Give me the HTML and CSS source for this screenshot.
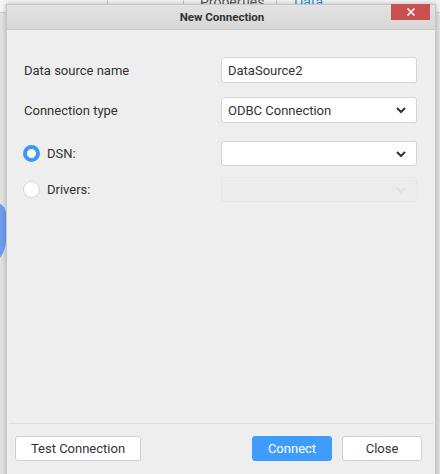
FILE: index.html
```html
<!DOCTYPE html>
<html>
<head>
<meta charset="utf-8">
<link rel="stylesheet" href="styles.css">
</head>
<body>
<div class="page">
  <div class="tabbar">
    <div class="tab t1"></div>
    <div class="tab t2"></div>
    <div class="tab t3">Properties</div>
    <div class="tab t4 active">Data</div>
  </div>
  <div class="blob"></div>

  <div class="dialog">
    <div class="dlg-head">
      <span class="dlg-title">New Connection</span>
      <button class="close-x" aria-label="close">
        <svg width="10" height="10" viewBox="0 0 10 10"><path d="M1.5 1.5L8.5 8.5M8.5 1.5L1.5 8.5" stroke="#fff" stroke-width="1.6" fill="none"/></svg>
      </button>
    </div>
    <div class="dlg-body">
      <div class="row">
        <label class="lbl">Data source name</label>
        <div class="field">DataSource2</div>
      </div>
      <div class="row">
        <label class="lbl">Connection type</label>
        <div class="field select"><span>ODBC Connection</span>
          <svg class="chev" width="12" height="8" viewBox="0 0 12 8"><path d="M2 2L6 6L10 2" stroke="#333" stroke-width="2" fill="none"/></svg>
        </div>
      </div>
      <div class="row radio-row">
        <label class="lbl radio-lbl"><span class="radio on"></span>DSN:</label>
        <div class="field select">
          <svg class="chev" width="12" height="8" viewBox="0 0 12 8"><path d="M2 2L6 6L10 2" stroke="#333" stroke-width="2" fill="none"/></svg>
        </div>
      </div>
      <div class="row radio-row2">
        <label class="lbl radio-lbl"><span class="radio"></span>Drivers:</label>
        <div class="field select disabled">
          <svg class="chev" width="12" height="8" viewBox="0 0 12 8"><path d="M2 2L6 6L10 2" stroke="#e0e0e0" stroke-width="2" fill="none"/></svg>
        </div>
      </div>
    </div>
    <div class="dlg-foot">
      <button class="btn test">Test Connection</button>
      <div class="foot-right">
        <button class="btn primary">Connect</button>
        <button class="btn close">Close</button>
      </div>
    </div>
  </div>
</div>
</body>
</html>
```

FILE: styles.css
```css
html, body {
  margin: 0;
  padding: 0;
}
body {
  width: 440px;
  height: 474px;
  overflow: hidden;
  background: #e4e4e4;
  font-family: Roboto, "Liberation Sans", sans-serif;
  color: #333;
}
.page {
  position: relative;
  width: 440px;
  height: 474px;
  background: #e2e2e2;
}
.tabbar {
  display: flex;
  height: 12px;
  background: #f4f4f4;
  border-bottom: 1px solid #d0d0d0;
}
.tab {
  height: 12px;
  font-size: 14px;
  line-height: 12px;
  overflow: hidden;
  box-sizing: border-box;
}
.t1 { width: 107px; }
.t2 { width: 69px; border-left: 1px solid #c4c4c4; }
.t3 { width: 94px; margin-left: 7px; border-left: 1px solid #c4c4c4; border-right: 1px solid #c4c4c4; padding-left: 16px; color: #555; line-height: 4px; }
.t4 { padding-left: 17px; color: #2a8fd9; line-height: 4px; }
.blob {
  position: absolute;
  left: -30px;
  top: 202px;
  width: 36px;
  height: 68px;
  border-radius: 0 12px 30px 0;
  background: #6f9df0;
}
.dialog {
  position: absolute;
  left: 6px;
  top: 4px;
  width: 430px;
  height: 475px;
  box-sizing: border-box;
  border: 1px solid #c8c8c8;
  background: #eeeeee;
  box-shadow: 0 0 5px rgba(0,0,0,0.25);
  display: flex;
  flex-direction: column;
}
.dlg-head {
  position: relative;
  height: 24px;
  flex: none;
  background: linear-gradient(#e2e2e2, #d7d7d7);
  border-bottom: 1px solid #c9c9c9;
  display: flex;
  align-items: center;
  justify-content: center;
}
.dlg-title {
  font-size: 11.5px;
  font-weight: bold;
  color: #333;
  margin-left: 2px;
}
.close-x {
  position: absolute;
  right: 5px;
  top: -1px;
  width: 39px;
  height: 16px;
  border: none;
  padding: 0;
  background: #c8504f;
  display: flex;
  align-items: center;
  justify-content: center;
}
.dlg-body {
  flex: 1;
  padding: 27px 18px 0 17px;
  display: flex;
  flex-direction: column;
}
.row {
  display: flex;
  align-items: center;
  justify-content: space-between;
  height: 26px;
  margin-bottom: 14px;
}
.row.radio-row { margin-top: 4px; margin-bottom: 11px; height: 25px; }
.row.radio-row2 { height: 25px; }
.lbl {
  font-size: 13px;
  color: #333;
}
.radio-lbl {
  display: flex;
  align-items: center;
  gap: 7px;
  margin-left: -1px;
}
.radio {
  width: 17px;
  height: 17px;
  box-sizing: border-box;
  border-radius: 50%;
  background: #fff;
  border: 1px solid #d4d4d4;
}
.radio.on {
  border: 4px solid #3d97f5;
}
.field {
  width: 196px;
  height: 100%;
  box-sizing: border-box;
  background: #fff;
  border: 1px solid #d6d6d6;
  border-radius: 3px;
  font-size: 13px;
  color: #333;
  padding: 0 6px;
  display: flex;
  align-items: center;
}
.chev { margin-left: auto; margin-right: 3px; }
.field.disabled {
  background: #ececec;
  border-color: #e6e6e6;
}
.dlg-foot {
  flex: none;
  height: 55px;
  box-sizing: border-box;
  border-top: 1px solid #dedede;
  margin: 0 2px;
  display: flex;
  align-items: flex-start;
  justify-content: space-between;
  padding: 12px 11px 0 6px;
}
.foot-right {
  display: flex;
  gap: 10px;
}
.btn {
  height: 25px;
  box-sizing: border-box;
  border: 1px solid #cfcfcf;
  border-radius: 3px;
  background: #fff;
  font-family: Roboto, "Liberation Sans", sans-serif;
  font-size: 13px;
  color: #333;
  padding: 0;
}
.btn.test { width: 126px; }
.btn.primary { width: 80px; background: #3d9cfc; border-color: #3d9cfc; color: #fff; }
.btn.close { width: 80px; }
```
